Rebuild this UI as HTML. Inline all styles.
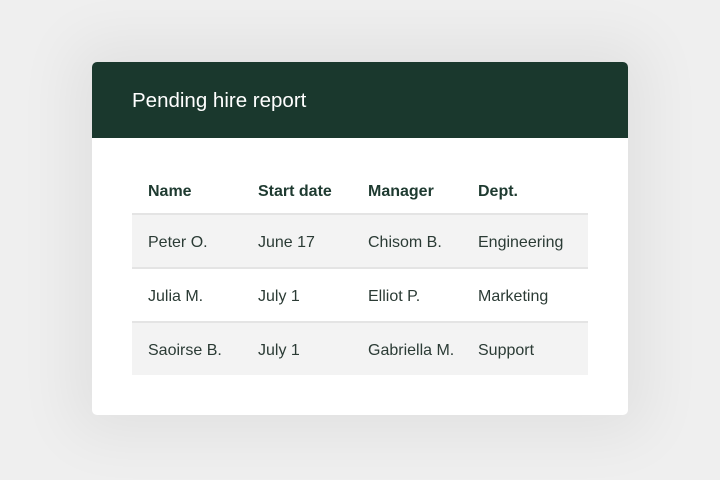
<!DOCTYPE html>
<html><head><style>
html,body{margin:0;padding:0;width:720px;height:480px;background:#efefef;overflow:hidden;font-family:"Liberation Sans",sans-serif;}
.card{position:absolute;left:92px;top:62px;width:536px;height:353px;background:#fff;border-radius:5px;overflow:hidden;box-shadow:0 0 60px 20px rgba(0,0,0,0.06);}
.hd{height:76px;background:#1a382d;color:#fff;font-size:20.5px;line-height:78px;padding-left:40px;}
.tbl{position:absolute;left:40px;top:103px;width:456px;}
.row{height:52px;position:relative;font-size:16px;color:#2b3b35;border-top:2px solid #e4e4e4;}
.row span{position:absolute;top:0;line-height:56px;}
.h{height:48px;border-top:none;font-weight:bold;color:#1e3a30;font-size:16px;}
.h span{line-height:54px;}
.g{background:#f3f3f3;}
.c1{left:16px}.c2{left:126px}.c3{left:236px}.c4{left:346px}
</style></head><body>
<div class="card">
<div class="hd">Pending hire report</div>
<div class="tbl">
<div class="row h"><span class="c1">Name</span><span class="c2">Start date</span><span class="c3">Manager</span><span class="c4">Dept.</span></div>
<div class="row g"><span class="c1">Peter O.</span><span class="c2">June 17</span><span class="c3">Chisom B.</span><span class="c4">Engineering</span></div>
<div class="row"><span class="c1">Julia M.</span><span class="c2">July 1</span><span class="c3">Elliot P.</span><span class="c4">Marketing</span></div>
<div class="row g"><span class="c1">Saoirse B.</span><span class="c2">July 1</span><span class="c3">Gabriella M.</span><span class="c4">Support</span></div>
</div>
</div>
</body></html>
